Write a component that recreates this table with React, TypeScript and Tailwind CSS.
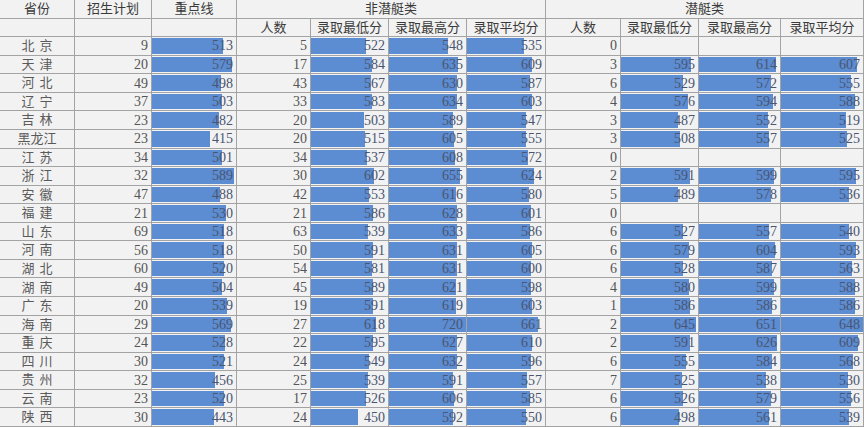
import React from "react";

type Row = {
  name: string;
  plan: number;
  line: number;
  nCount: number;
  nMin: number;
  nMax: number;
  nAvg: number;
  sCount: number;
  sMin?: number;
  sMax?: number;
  sAvg?: number;
};

const raw: (string | number)[][] = [
  ["北京", 9, 513, 5, 522, 548, 535, 0],
  ["天津", 20, 579, 17, 584, 635, 609, 3, 595, 614, 607],
  ["河北", 49, 498, 43, 567, 630, 587, 6, 529, 572, 555],
  ["辽宁", 37, 503, 33, 583, 634, 603, 4, 576, 594, 588],
  ["吉林", 23, 482, 20, 503, 589, 547, 3, 487, 552, 519],
  ["黑龙江", 23, 415, 20, 515, 605, 555, 3, 508, 557, 525],
  ["江苏", 34, 501, 34, 537, 608, 572, 0],
  ["浙江", 32, 589, 30, 602, 655, 624, 2, 591, 599, 595],
  ["安徽", 47, 488, 42, 553, 616, 580, 5, 489, 578, 536],
  ["福建", 21, 530, 21, 586, 628, 601, 0],
  ["山东", 69, 518, 63, 539, 633, 586, 6, 527, 557, 540],
  ["河南", 56, 518, 50, 591, 631, 605, 6, 579, 604, 593],
  ["湖北", 60, 520, 54, 581, 631, 600, 6, 528, 587, 563],
  ["湖南", 49, 504, 45, 589, 621, 598, 4, 580, 599, 588],
  ["广东", 20, 539, 19, 591, 619, 603, 1, 586, 586, 586],
  ["海南", 29, 569, 27, 618, 720, 661, 2, 645, 651, 648],
  ["重庆", 24, 528, 22, 595, 627, 610, 2, 591, 626, 609],
  ["四川", 30, 521, 24, 549, 632, 596, 6, 555, 584, 568],
  ["贵州", 32, 456, 25, 539, 591, 557, 7, 525, 538, 530],
  ["云南", 23, 520, 17, 526, 606, 585, 6, 526, 579, 556],
  ["陕西", 30, 443, 24, 450, 592, 550, 6, 498, 561, 539],
];

const rows: Row[] = raw.map((r) => ({
  name: r[0] as string,
  plan: r[1] as number,
  line: r[2] as number,
  nCount: r[3] as number,
  nMin: r[4] as number,
  nMax: r[5] as number,
  nAvg: r[6] as number,
  sCount: r[7] as number,
  sMin: r[8] as number | undefined,
  sMax: r[9] as number | undefined,
  sAvg: r[10] as number | undefined,
}));

const cell = "border-r border-b border-[#a3a3a3] min-w-0 overflow-hidden";

const Head = ({ text, span }: { text: string; span?: boolean }) => (
  <div
    className={`${cell} flex items-center justify-center text-[13px] text-[#3a3a3a] ${
      span ? "col-span-4" : ""
    }`}
  >
    {text}
  </div>
);

const Num = ({ v }: { v?: number }) => (
  <div className={`${cell} flex items-center justify-end pr-[3px] text-[14px]`}>
    {v}
  </div>
);

const Bar = ({ v, k, max }: { v?: number; k: number; max: number }) => (
  <div className={`${cell} relative flex items-center justify-end pr-[3px] text-[14px]`}>
    {v !== undefined && (
      <div
        className="absolute left-0 top-[1px] bottom-[1px] bg-[#5c8cd2]"
        style={{ width: Math.min(v * k, max) }}
      />
    )}
    <span className="relative text-[#4a5570]">{v}</span>
  </div>
);

const Province = ({ name }: { name: string }) => (
  <div
    className={`${cell} flex items-center justify-center text-[13px] text-[#5a5a5a] ${
      name.length === 2 ? "gap-[5px]" : "gap-0"
    }`}
  >
    {name.split("").map((c, i) => (
      <span key={i}>{c}</span>
    ))}
  </div>
);

const App = () => {
  return (
    <div className="w-[864px] h-[427px] overflow-hidden bg-[#f2f2f2] text-[#555] font-['Liberation_Serif','Noto_Sans_CJK_SC',serif]">
      <div className="grid h-[427px] grid-cols-[75px_77px_85px_74px_78px_78px_79px_75px_78px_82px_83px] grid-rows-[repeat(23,minmax(0,1fr))]">
        <Head text="省份" />
        <Head text="招生计划" />
        <Head text="重点线" />
        <Head text="非潜艇类" span />
        <Head text="潜艇类" span />

        <div className={cell} />
        <div className={cell} />
        <div className={cell} />
        <Head text="人数" />
        <Head text="录取最低分" />
        <Head text="录取最高分" />
        <Head text="录取平均分" />
        <Head text="人数" />
        <Head text="录取最低分" />
        <Head text="录取最高分" />
        <Head text="录取平均分" />

        {rows.map((r) => (
          <React.Fragment key={r.name}>
            <Province name={r.name} />
            <Num v={r.plan} />
            <Bar v={r.line} k={0.139} max={83} />
            <Num v={r.nCount} />
            <Bar v={r.nMin} k={0.105} max={76} />
            <Bar v={r.nMax} k={0.108} max={77} />
            <Bar v={r.nAvg} k={0.107} max={78} />
            <Num v={r.sCount} />
            <Bar v={r.sMin} k={0.117} max={77} />
            <Bar v={r.sMax} k={0.125} max={81} />
            <Bar v={r.sAvg} k={0.126} max={82} />
          </React.Fragment>
        ))}
      </div>
    </div>
  );
};

export default App;
